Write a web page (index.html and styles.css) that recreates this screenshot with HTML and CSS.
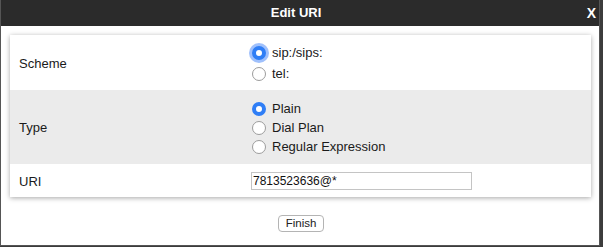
FILE: index.html
```html
<!DOCTYPE html>
<html lang="en">
<head>
    <meta charset="UTF-8" />
    <title>Edit URI</title>
    <link rel="stylesheet" href="styles.css">
</head>
<body>
    <div class="dialog">
        <div class="titlebar">
            Edit URI
            <span class="close">X</span>
        </div>

        <div class="content">
            <div class="card">
                <div class="row row-scheme">
                    <div class="label">Scheme</div>
                    <div class="options">
                        <label class="option"><input type="radio" name="scheme" class="focused" checked /> sip:/sips:</label>
                        <label class="option"><input type="radio" name="scheme" /> tel:</label>
                    </div>
                </div>

                <div class="row row-type">
                    <div class="label">Type</div>
                    <div class="options">
                        <label class="option"><input type="radio" name="type" checked /> Plain</label>
                        <label class="option"><input type="radio" name="type" /> Dial Plan</label>
                        <label class="option"><input type="radio" name="type" /> Regular Expression</label>
                    </div>
                </div>

                <div class="row row-uri">
                    <div class="label">URI</div>
                    <div><input type="text" class="uri-input" value="7813523636@*" /></div>
                </div>
            </div>

            <div class="actions">
                <button type="button">Finish</button>
            </div>
        </div>
    </div>
</body>
</html>
```

FILE: styles.css
```css
/* General Reset */
* {
    box-sizing: border-box;
    margin: 0;
    padding: 0;
}
body {
    font-family: 'Liberation Sans', Arial, sans-serif;
    font-size: 13px;
    background: #3c3c3c;
    color: #1a1a1a;
}
.dialog {
    width: 600px;
    height: 246px;
    background: #fff;
    border: 1px solid #555;
    border-top: none;
}
.titlebar {
    position: relative;
    height: 26px;
    line-height: 26px;
    background: #2b2b2b;
    color: #fff;
    font-weight: 700;
    font-size: 13px;
    text-align: center;
    padding-right: 8px;
}
.close {
    position: absolute;
    right: 3px;
    top: 0;
    font-size: 14px;
}
.content {
    padding: 9px 8px 0 9px;
}
.card {
    background: #fff;
    box-shadow: 0 1px 5px rgba(0, 0, 0, 0.35);
}
.row {
    display: grid;
    grid-template-columns: 241px 1fr;
    align-items: center;
}
.label {
    padding-left: 9px;
}
.row-scheme {
    padding: 7px 0 6px;
}
.row-scheme .option {
    line-height: 21px;
}
.row-type {
    background: #ebebeb;
    padding: 9px 0 8px;
}
.row-type .option {
    line-height: 19px;
}
.row-uri {
    padding: 8px 0 7px;
}
.option {
    display: flex;
    align-items: center;
}
input[type="radio"] {
    appearance: none;
    width: 14px;
    height: 14px;
    margin: 0 6px 0 1px;
    border: 1px solid #9c9c9c;
    border-radius: 50%;
    background: #fff;
}
input[type="radio"]:checked {
    border: 4.5px solid #2f7ef6;
    background: #fff;
}
input.focused {
    box-shadow: 0 0 0 3px rgba(80, 140, 250, 0.55);
}
.uri-input {
    width: 221px;
    height: 18px;
    border: 1px solid #c4c4c4;
    font-family: 'Liberation Sans', Arial, sans-serif;
    font-size: 12px;
    padding: 0 1px;
    color: #111;
}
.actions {
    text-align: center;
    padding-top: 18px;
    padding-left: 1px;
}
button {
    font-family: 'Liberation Sans', Arial, sans-serif;
    font-size: 11.5px;
    height: 17px;
    line-height: 15px;
    padding: 0 7px;
    background: #fff;
    border: 1px solid #b4b4b4;
    border-radius: 4px;
    color: #222;
}
```
